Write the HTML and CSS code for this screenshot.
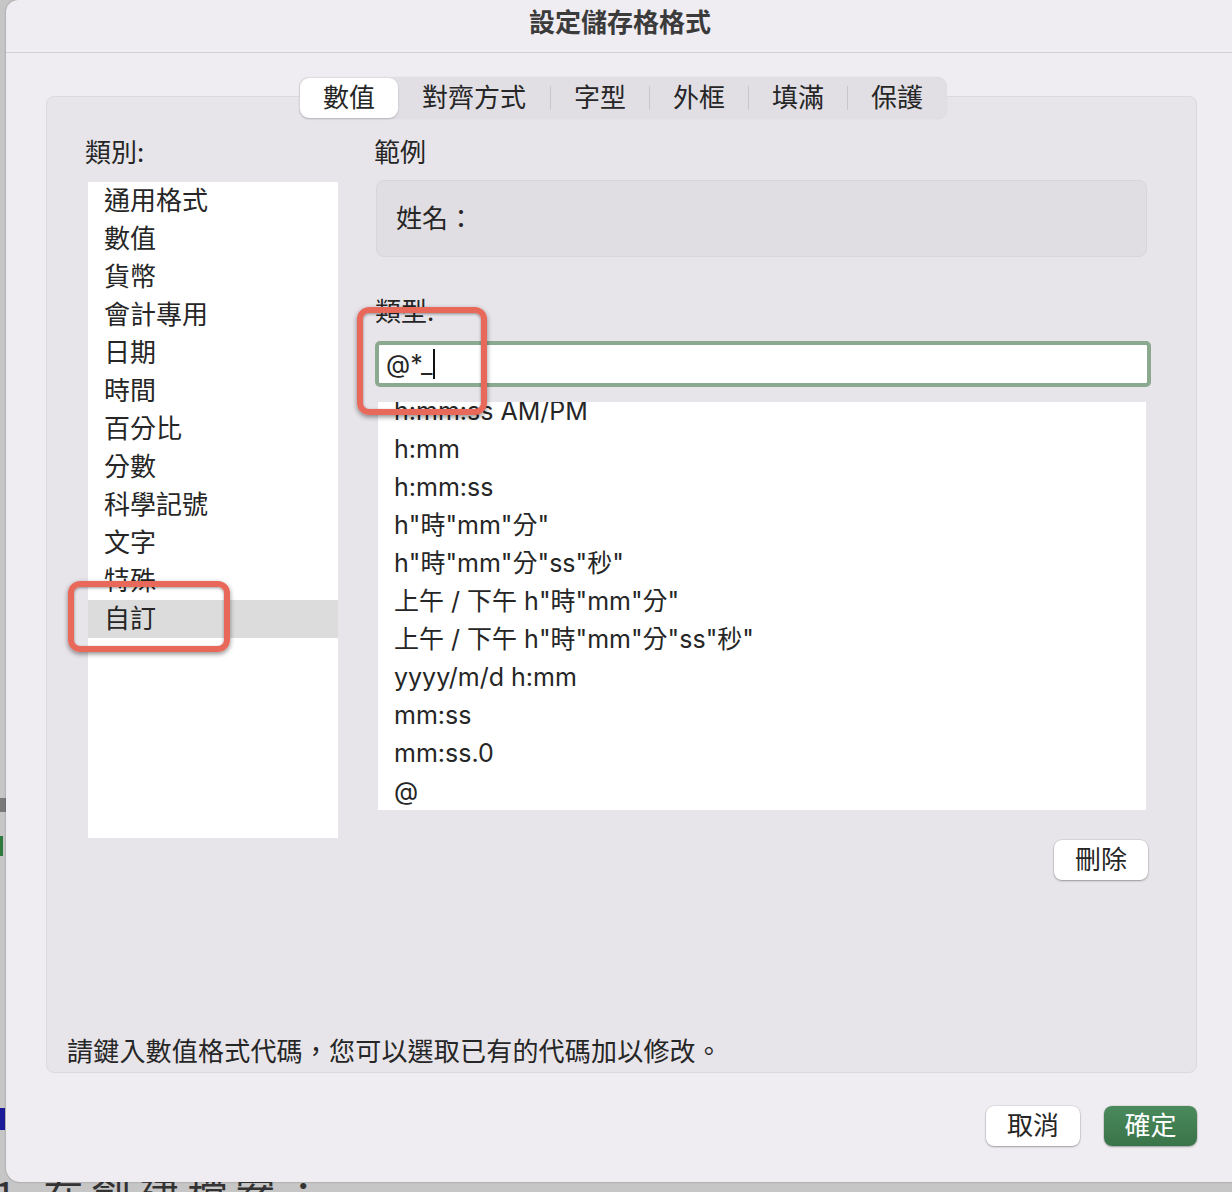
FILE: index.html
```html
<!DOCTYPE html>
<html lang="zh-Hant">
<head>
    <meta charset="UTF-8">
    <meta name="viewport" content="width=device-width, initial-scale=1.0">
    <title>設定儲存格格式</title>
    <link rel="stylesheet" href="styles.css">
</head>
<body>
    <!-- sheet behind the dialog -->
    <div class="behind behind-bar"></div>
    <div class="behind behind-green"></div>
    <div class="behind behind-blue"></div>
    <div class="behind behind-text">1.在創建檔案：</div>

    <div class="dialog">
        <div class="titlebar">設定儲存格格式</div>

        <div class="tabs">
            <button class="tab active">數值</button>
            <button class="tab wide">對齊方式</button>
            <span class="sep"></span>
            <button class="tab">字型</button>
            <span class="sep"></span>
            <button class="tab">外框</button>
            <span class="sep"></span>
            <button class="tab">填滿</button>
            <span class="sep"></span>
            <button class="tab">保護</button>
        </div>

        <div class="panel">
            <div class="cols">
                <div class="left">
                    <div class="label">類別:</div>
                    <ul class="cat-list">
                        <li>通用格式</li>
                        <li>數值</li>
                        <li>貨幣</li>
                        <li>會計專用</li>
                        <li>日期</li>
                        <li>時間</li>
                        <li>百分比</li>
                        <li>分數</li>
                        <li>科學記號</li>
                        <li>文字</li>
                        <li>特殊</li>
                        <li class="selected">自訂</li>
                    </ul>
                </div>
                <div class="right">
                    <div class="label">範例</div>
                    <div class="sample">姓名：</div>
                    <div class="label type-label">類型:</div>
                    <div class="type-input"><span class="typed">@*_</span><span class="caret"></span></div>
                    <div class="fmt-list">
                        <ul>
                            <li>h:mm:ss AM/PM</li>
                            <li>h:mm</li>
                            <li>h:mm:ss</li>
                            <li>h"時"mm"分"</li>
                            <li>h"時"mm"分"ss"秒"</li>
                            <li>上午 / 下午 h"時"mm"分"</li>
                            <li>上午 / 下午 h"時"mm"分"ss"秒"</li>
                            <li>yyyy/m/d h:mm</li>
                            <li>mm:ss</li>
                            <li>mm:ss.0</li>
                            <li>@</li>
                        </ul>
                    </div>
                    <div class="del-row"><button class="btn">刪除</button></div>
                </div>
            </div>
            <p class="hint">請鍵入數值格式代碼，您可以選取已有的代碼加以修改。</p>
        </div>

        <div class="actions">
            <button class="btn">取消</button>
            <button class="btn ok">確定</button>
        </div>

        <!-- red call-out boxes -->
        <div class="mark mark-custom"></div>
        <div class="mark mark-type"></div>
    </div>
</body>
</html>
```

FILE: styles.css
```css
*{
    margin: 0;
    padding: 0;
    box-sizing: border-box;
}
body{
    width: 1232px;
    height: 1192px;
    overflow: hidden;
    background-color: #c6c6c6;
    font-family: "Noto Sans CJK TC", "Liberation Sans", sans-serif;
    color: #262626;
    position: relative;
}
.behind{
    position: absolute;
    z-index: 0;
}
.behind-bar{
    left: 0;
    top: 798px;
    width: 8px;
    height: 14px;
    background-color: #7a7a7a;
}
.behind-green{
    left: 0;
    top: 836px;
    width: 4px;
    height: 20px;
    border-left: 3px solid #2e7a3e;
}
.behind-blue{
    left: 0;
    top: 1108px;
    width: 5px;
    height: 22px;
    background-color: #1b1b9a;
}
.behind-text{
    left: -6px;
    top: 1170px;
    font-size: 40px;
    line-height: 48px;
    color: #333;
    letter-spacing: 8px;
}
.dialog{
    position: relative;
    z-index: 1;
    margin-left: 6px;
    width: 1240px;
    height: 1182px;
    background-color: #efecf2;
    border-radius: 12px 0 0 14px;
    box-shadow: 0 0 2px rgba(0,0,0,0.35);
}
.titlebar{
    height: 53px;
    border-bottom: 1px solid #d3d0d6;
    text-align: center;
    font-size: 26px;
    font-weight: 700;
    line-height: 42px;
    color: #3b3b3b;
    padding-right: 12px;
}

/* segmented tabs */
.tabs{
    position: relative;
    z-index: 2;
    display: flex;
    align-items: center;
    width: 648px;
    height: 42px;
    margin: 24px 0 -23px 293px;
    padding: 1px;
    background-color: #e1dee4;
    border-radius: 10px;
    box-shadow: 0 0 1px rgba(0,0,0,0.15);
}
.tab{
    width: 98px;
    height: 40px;
    padding-bottom: 4px;
    border: none;
    background: none;
    font-family: inherit;
    font-size: 26px;
    color: #262626;
    line-height: 36px;
}
.tab.wide{
    width: 152px;
}
.tab.active{
    background-color: #fff;
    border-radius: 9px;
    box-shadow: 0 1px 2px rgba(0,0,0,0.2);
}
.sep{
    width: 1px;
    height: 24px;
    background-color: #c9c6cc;
}

.panel{
    display: flex;
    flex-direction: column;
    width: 1151px;
    height: 977px;
    margin-left: 40px;
    padding: 38px 0 4px 20px;
    background-color: #e8e5ea;
    border: 1px solid #dcd9de;
    border-radius: 8px;
}
.cols{
    display: flex;
    gap: 36px;
    padding-left: 18px;
}
.label{
    height: 36px;
    font-size: 26px;
    line-height: 32px;
}
.left{
    width: 253px;
}
.cat-list{
    list-style: none;
    margin: 11px 0 0 3px;
    width: 250px;
    height: 656px;
    background-color: #fff;
}
.cat-list li{
    height: 38px;
    line-height: 34px;
    padding-left: 16px;
    font-size: 26px;
}
.cat-list li.selected{
    background-color: #dcdcdc;
}

.right{
    width: 777px;
}
.sample{
    margin: 9px 4px 0 2px;
    height: 77px;
    padding-left: 19px;
    line-height: 71px;
    font-size: 26px;
    background-color: #e1dee3;
    border: 1px solid #d8d5db;
    border-radius: 8px;
}
.type-label{
    margin-top: 37px;
    padding-left: 1px;
}
.type-input{
    display: flex;
    align-items: center;
    margin: 11px 0 0 1px;
    height: 46px;
    padding-left: 7px;
    background-color: #fff;
    border: 4px solid #8aa98f;
    border-radius: 5px;
}
.typed{
    font-family: "Inter", "Liberation Sans", sans-serif;
    font-size: 25px;
}
.caret{
    width: 2px;
    height: 30px;
    margin-left: 1px;
    background-color: #111;
}
.fmt-list{
    margin: 15px 5px 0 4px;
    height: 408px;
    overflow: hidden;
    background-color: #fff;
}
.fmt-list ul{
    list-style: none;
    margin-top: -10px;
}
.fmt-list li{
    height: 38px;
    line-height: 38px;
    padding-left: 16px;
    font-family: "Inter", "Noto Sans CJK TC", sans-serif;
    font-size: 25px;
    white-space: pre;
}
.del-row{
    display: flex;
    justify-content: flex-end;
    margin: 30px 3px 0 0;
}
.btn{
    width: 94px;
    height: 40px;
    padding-bottom: 4px;
    border: none;
    border-radius: 8px;
    background-color: #fff;
    box-shadow: 0 0 0 0.5px rgba(0,0,0,0.12), 0 1px 2px rgba(0,0,0,0.3);
    font-family: inherit;
    font-size: 26px;
    line-height: 34px;
    color: #262626;
}
.hint{
    margin-top: auto;
    font-size: 26px;
    line-height: 36px;
    letter-spacing: 0.2px;
}
.actions{
    display: flex;
    justify-content: flex-end;
    gap: 24px;
    width: 1151px;
    margin: 33px 0 0 40px;
}
.btn.ok{
    width: 93px;
    color: #fff;
    background: linear-gradient(#4a8a5c, #3a7449);
}

.mark{
    position: absolute;
    border: 6px solid #e8685a;
    border-radius: 12px;
    box-shadow: 0 2px 5px rgba(0,0,0,0.45), inset 0 1px 3px rgba(0,0,0,0.4);
}
.mark-custom{
    left: 62px;
    top: 581px;
    width: 162px;
    height: 71px;
}
.mark-type{
    left: 351px;
    top: 307px;
    width: 130px;
    height: 108px;
}
```
